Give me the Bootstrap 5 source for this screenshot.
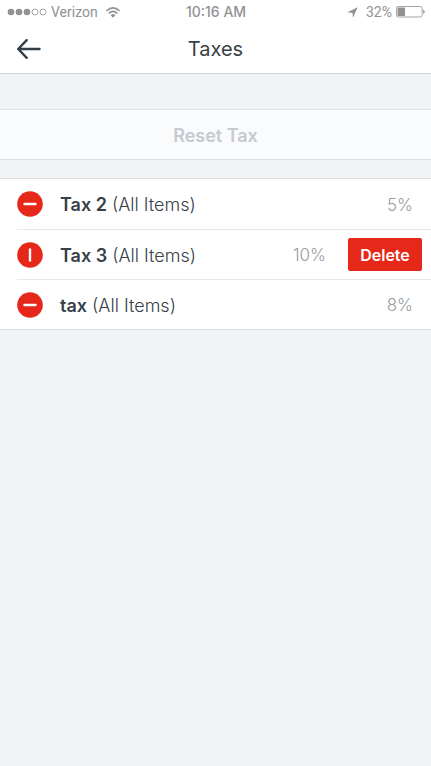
<!DOCTYPE html>
<html lang="en">
<head>
<meta charset="utf-8">
<meta name="viewport" content="width=device-width, initial-scale=1">
<title>Taxes</title>
<link href="https://cdn.jsdelivr.net/npm/bootstrap@5.3.0/dist/css/bootstrap.min.css" rel="stylesheet">
<style>
body { background: #f2f3f5; color: #373f47; font-family: Inter, "Liberation Sans", sans-serif; font-size: 18px; line-height: 24px; }
svg { display: block; flex: none; }
.top-bar { border-bottom: 1px solid #d3d5d7; }
.status-bar { height: 24px; padding: 0 6px 0 7px; color: #929292; font-family: Roboto, sans-serif; font-size: 14px; }
.status-side { flex: 1 1 0; }
.status-time { font-family: Inter, sans-serif; font-weight: 500; font-size: 14px; }
.title-bar { height: 49px; padding: 0 16px; }
.title-bar .title-side { flex: 1 1 0; }
.title-bar h1 { font-size: 20px; line-height: 24px; font-weight: 400; }
.back-btn { color: #323e48; }
.reset-btn { height: 51px; margin-top: 35px; padding: 2px 0 0; background: #fafbfd; border: solid #dee1e4; border-width: 1px 0; color: #c5cad0; font-size: 18px; font-weight: 600; line-height: 24px; }
.tax-list { margin-top: 18px; border: solid #dee1e4; border-width: 1px 0; padding-left: 17px; }
.tax-row { height: 50px; padding-right: 18px; }
.tax-row + .tax-row { border-top: 1px solid #e5e7e9; }
.tax-row.is-open { padding-right: 9px; }
.tax-name { margin-left: 17px; padding-top: 2px; font-weight: 300; }
.tax-name strong { font-weight: 600; }
.tax-rate { padding-top: 1px; color: #989ca1; font-size: 17px; font-weight: 300; }
.delete-btn { width: 74px; height: 33px; margin-left: 22px; background: #e6281a; border-radius: 2px; color: #fff; font-size: 16px; font-weight: 600; line-height: 24px; }
</style>
<script src="https://cdn.jsdelivr.net/npm/bootstrap@5.3.0/dist/js/bootstrap.bundle.min.js"></script>
</head>
<body>
<header class="top-bar bg-white">
  <div class="status-bar d-flex align-items-center">
    <div class="status-side d-flex align-items-center">
      <svg width="40" height="8" viewBox="0 0 40 8" fill="#929292" aria-hidden="true"><circle cx="4" cy="4" r="3.3"/><circle cx="12" cy="4" r="3.3"/><circle cx="20" cy="4" r="3.3"/><g fill="none" stroke="#929292" stroke-width=".8"><circle cx="28" cy="4" r="3"/><circle cx="36" cy="4" r="3"/></g></svg>
      <span class="ms-1">Verizon</span>
      <svg class="ms-2" width="14" height="11" viewBox="0 0 14 11" fill="none" stroke="#929292" stroke-width="1.6" aria-hidden="true"><path d="M.5 4Q7-2.2 13.5 4M2.7 6.4Q7 2.4 11.3 6.4"/><path d="M4.6 8.2Q7 6 9.4 8.2L7 10.7Z" fill="#929292" stroke="none"/></svg>
    </div>
    <span class="status-time">10:16 AM</span>
    <div class="status-side d-flex align-items-center justify-content-end">
      <svg width="11" height="11" viewBox="0 0 11 11" fill="#929292" aria-hidden="true"><path d="M10.7.3 6 10.8 5.5 5.9.3 5.3Z"/></svg>
      <span class="ms-2">32%</span>
      <svg class="ms-1" width="29" height="12" viewBox="0 0 29 12" aria-hidden="true"><rect x=".5" y=".5" width="25.6" height="10.5" rx="1.7" fill="none" stroke="#a5a5a5"/><path d="M1.5 1.5h7.5v8.5H1.5z" fill="#929292"/><path d="M27.2 3.8q1.6.3 1.6 2t-1.6 2z" fill="#929292"/></svg>
    </div>
  </div>
  <div class="title-bar d-flex align-items-center">
    <div class="title-side"><button type="button" class="back-btn btn d-block p-0 border-0" aria-label="Back"><svg width="26" height="22" viewBox="0 0 26 22" fill="none" stroke="currentColor" stroke-width="2.4" stroke-linecap="round" stroke-linejoin="round"><path d="M23.5 11H2.2M10.7 2.2 2.2 11l8.5 8.8"/></svg></button></div>
    <h1 class="m-0">Taxes</h1>
    <div class="title-side"></div>
  </div>
</header>
<main>
  <button type="button" class="reset-btn d-block w-100">Reset Tax</button>
  <ul class="tax-list list-unstyled bg-white mb-0">
    <li class="tax-row d-flex align-items-center">
      <button type="button" class="btn p-0 border-0" aria-label="Remove Tax 2"><svg width="26" height="26" viewBox="0 0 26 26"><circle cx="13" cy="13" r="12.8" fill="#e6281a"/><path d="M7.5 13h11" stroke="#fff" stroke-width="2.4" stroke-linecap="round"/></svg></button>
      <span class="tax-name flex-grow-1"><strong>Tax 2</strong> (All Items)</span>
      <span class="tax-rate">5%</span>
    </li>
    <li class="tax-row is-open d-flex align-items-center">
      <button type="button" class="btn p-0 border-0" aria-label="Cancel removing Tax 3"><svg width="26" height="26" viewBox="0 0 26 26"><circle cx="13" cy="13" r="12.8" fill="#e6281a"/><path d="M13 7.5v11" stroke="#fff" stroke-width="2.4" stroke-linecap="round"/></svg></button>
      <span class="tax-name flex-grow-1"><strong>Tax 3</strong> (All Items)</span>
      <span class="tax-rate">10%</span>
      <button type="button" class="delete-btn border-0 p-0">Delete</button>
    </li>
    <li class="tax-row d-flex align-items-center">
      <button type="button" class="btn p-0 border-0" aria-label="Remove tax"><svg width="26" height="26" viewBox="0 0 26 26"><circle cx="13" cy="13" r="12.8" fill="#e6281a"/><path d="M7.5 13h11" stroke="#fff" stroke-width="2.4" stroke-linecap="round"/></svg></button>
      <span class="tax-name flex-grow-1"><strong>tax</strong> (All Items)</span>
      <span class="tax-rate">8%</span>
    </li>
  </ul>
</main>
</body>
</html>
